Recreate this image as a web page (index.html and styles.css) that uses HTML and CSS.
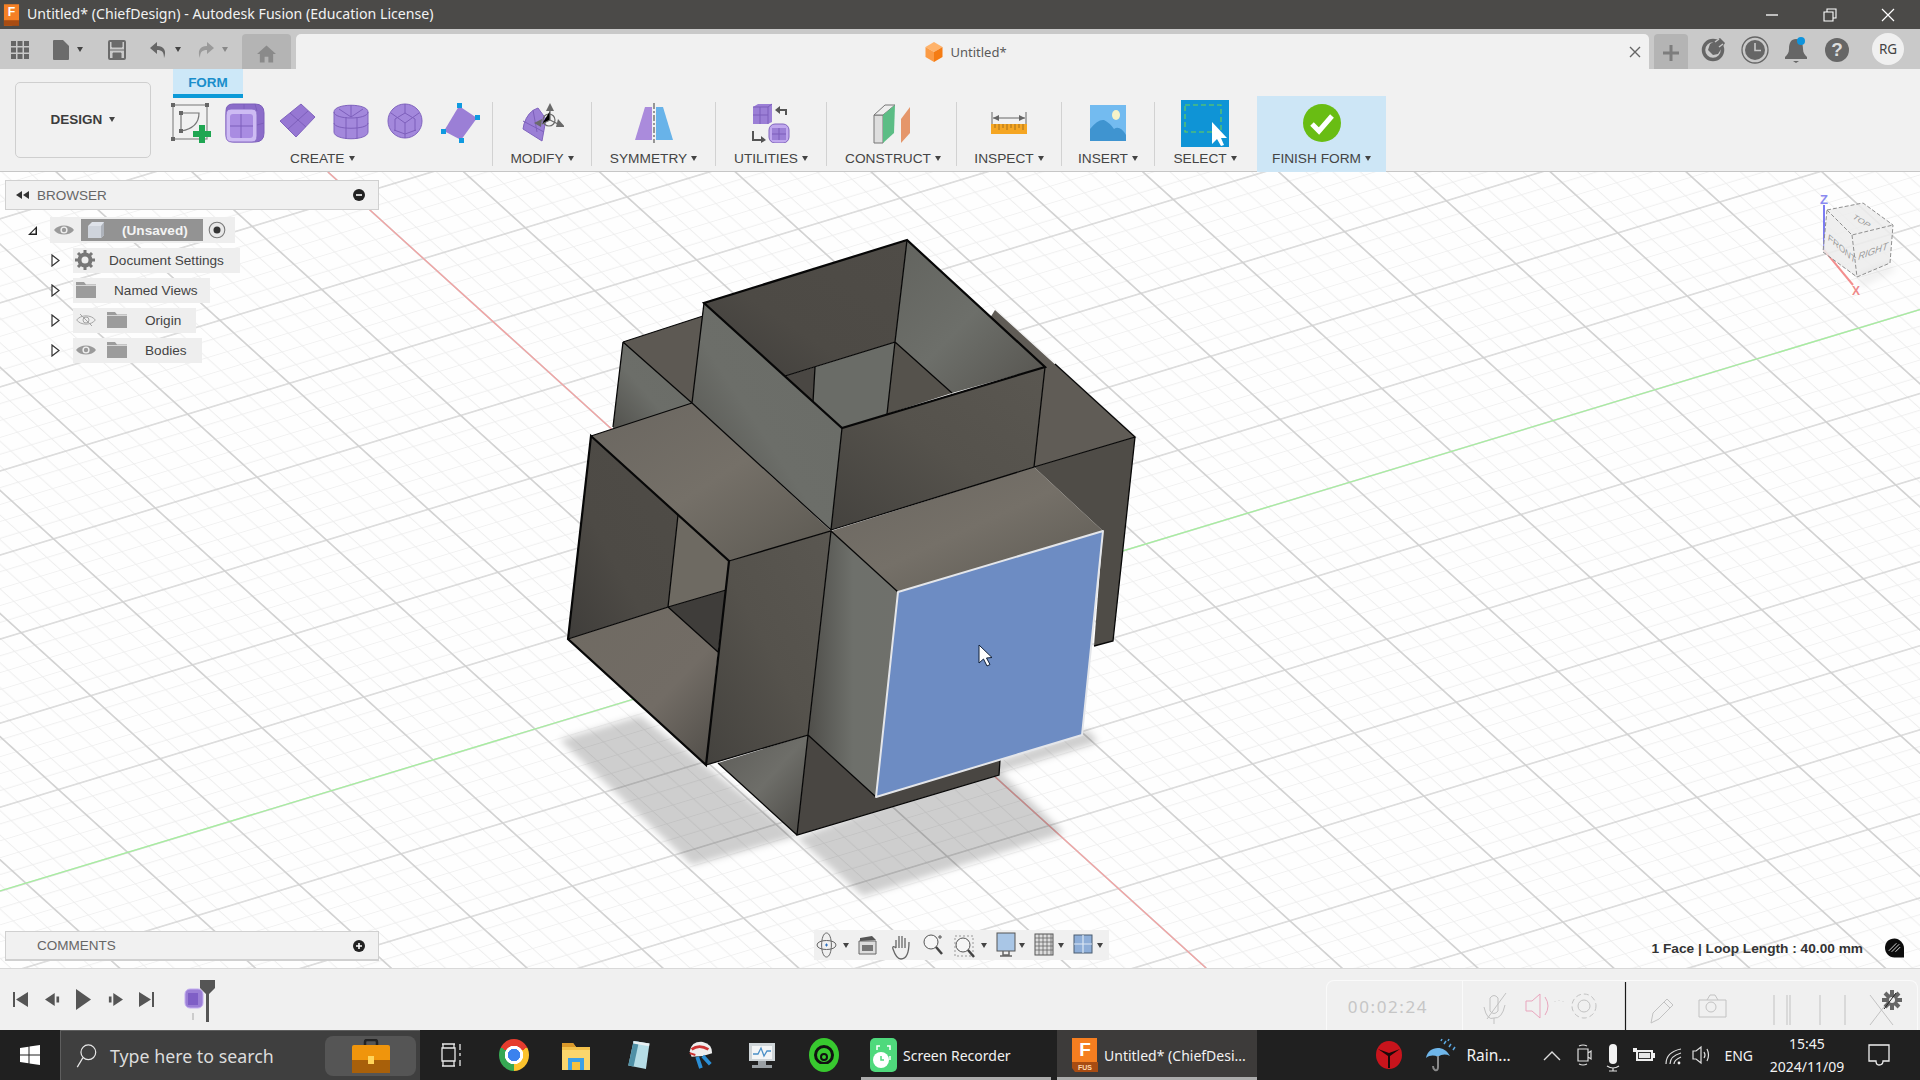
FILE: index.html
```html
<!DOCTYPE html>
<html lang="en">
<head>
<meta charset="utf-8">
<title>Untitled* (ChiefDesign) - Autodesk Fusion</title>
<link rel="stylesheet" href="styles.css">
</head>
<body>
<svg class="sprite" aria-hidden="true">
  <symbol id="eye" viewBox="0 0 20 14"><path d="M0 7C4 1 16 1 20 7 16 13 4 13 0 7Z" fill="#9a9a9a"/><circle cx="10" cy="7" r="3.6" fill="#f0f0f0"/><circle cx="10" cy="7" r="2.2" fill="#9a9a9a"/></symbol>
  <symbol id="eyeoff" viewBox="0 0 20 14"><path d="M.7 7C4.5 1.5 15.5 1.5 19.3 7 15.5 12.5 4.5 12.5.7 7Z" fill="none" stroke="#a5a5a5"/><circle cx="10" cy="7" r="3" fill="none" stroke="#a5a5a5"/><path d="M4 1 16 13" stroke="#a5a5a5"/></symbol>
  <symbol id="folder" viewBox="0 0 20 16"><path d="M0 0H8L10 2.500H20V16H0Z" fill="#9c9c9c"/><path d="M0 3.500H20" stroke="#f0f0f0" stroke-width=".7"/></symbol>
  <symbol id="expand" viewBox="0 0 9 13"><path d="M1 1 8 6.500 1 12Z" fill="#fff" stroke="#333" stroke-width="1.200"/></symbol>
</svg>
<div class="app">
  <header class="titlebar">
    <svg class="app-icon" viewBox="0 0 18 23"><path d="M1 0H17V18L9 23H1Z" fill="#f58025"/><path d="M1 17H17V23H1Z" fill="#a84c12"/><text x="9" y="13" class="app-f">F</text></svg>
    <span class="title-text">Untitled* (ChiefDesign) - Autodesk Fusion (Education License)</span>
    <div class="win-controls">
      <svg viewBox="0 0 14 14"><path d="M1 7H13" stroke="#fff" stroke-width="1.300"/></svg>
      <svg viewBox="0 0 14 14"><path d="M1 4H10V13H1ZM4 4V1H13V10H10" fill="none" stroke="#fff" stroke-width="1.100"/></svg>
      <svg viewBox="0 0 14 14"><path d="M1 1 13 13M13 1 1 13" stroke="#fff" stroke-width="1.200"/></svg>
    </div>
  </header>

  <div class="qbar">
    <svg class="qa qa-grid" viewBox="0 0 18 18"><path d="M0 0H5V5H0ZM6.500 0H11.500V5H6.500ZM13 0H18V5H13ZM0 6.500H5V11.500H0ZM6.500 6.500H11.500V11.500H6.500ZM13 6.500H18V11.500H13ZM0 13H5V18H0ZM6.500 13H11.500V18H6.500ZM13 13H18V18H13Z" fill="#666"/></svg>
    <svg class="qa qa-doc" viewBox="0 0 16 20"><path d="M0 1Q0 0 1 0H10L16 6V19Q16 20 15 20H1Q0 20 0 19Z" fill="#6b6b6b"/></svg>
    <span class="caret caret-doc"></span>
    <svg class="qa qa-save" viewBox="0 0 18 20"><path d="M1 2Q1 1 2 1H16Q17 1 17 2V18Q17 19 16 19H2Q1 19 1 18Z" fill="none" stroke="#6b6b6b" stroke-width="2"/><path d="M1 10H17M4 1V7H14V1M5 19V13H13V19" fill="#6b6b6b" stroke="#6b6b6b"/></svg>
    <svg class="qa qa-undo" viewBox="0 0 18 18"><path d="M8 1 1 7 8 13V9C13 9 15 11 15 17 17.500 11 16 5 8 5Z" fill="#666"/></svg>
    <span class="caret caret-undo"></span>
    <svg class="qa qa-redo" viewBox="0 0 18 18"><path d="M10 1 17 7 10 13V9C5 9 3 11 3 17 .5 11 2 5 10 5Z" fill="#9a9a9a"/></svg>
    <span class="caret caret-redo"></span>
    <div class="home-btn"><svg viewBox="0 0 20 18"><path d="M10 0 20 9H17V18H12V12H8V18H3V9H0Z" fill="#8a8a8a"/></svg></div>
    <div class="doc-tab">
      <span></span>
      <div class="doc-title">
        <svg viewBox="0 0 18 20"><path d="M9 0 17.500 5 9 10 .5 5Z" fill="#ffb36b"/><path d="M.5 5 9 10V20L.5 15Z" fill="#fb9b45"/><path d="M17.500 5 9 10V20L17.500 15Z" fill="#f57c14"/></svg>
        <span>Untitled*</span>
      </div>
      <svg class="tab-close" viewBox="0 0 12 12"><path d="M1 1 11 11M11 1 1 11" stroke="#666" stroke-width="1.400"/></svg>
    </div>
    <div class="plus-btn"><svg viewBox="0 0 16 16"><path d="M0 8H16M8 0V16" stroke="#7d7d7d" stroke-width="3"/></svg></div>
    <svg class="qr qr-1" viewBox="0 0 30 30"><circle cx="15" cy="15" r="9.500" fill="none" stroke="#666" stroke-width="3.500"/><path d="M12 9 22 3 27 8 20 19 15 20 10 15Z" fill="#666"/><path d="M17 7 21 4M21 12 25 9" stroke="#c8c8c8" stroke-width="1.500"/></svg>
    <svg class="qr qr-2" viewBox="0 0 30 30"><circle cx="15" cy="15" r="13" fill="none" stroke="#666" stroke-width="1.300"/><circle cx="15" cy="15" r="10" fill="#666"/><path d="M15 8V15.500H21" fill="none" stroke="#c8c8c8" stroke-width="1.600"/></svg>
    <svg class="qr qr-3" viewBox="0 0 30 30"><path d="M15 4C10 4 8 8 8 14 8 18 6 20 4 22V24H26V22C24 20 22 18 22 14 22 8 20 4 15 4Z" fill="#666"/><path d="M12 26H18L15 28Z" fill="#666"/><circle cx="20" cy="6" r="4" fill="#0f94dc"/></svg>
    <svg class="qr qr-4" viewBox="0 0 30 30"><circle cx="15" cy="15" r="12" fill="#666"/><text x="15" y="21" class="help-q">?</text></svg>
    <div class="avatar">RG</div>
  </div>

  <div class="ribbon">
    <button class="design-btn">DESIGN<span class="caret caret-design"></span></button>
    <section class="group group-create">
      <div class="form-tab">FORM</div>
      <div class="create-icons">
        <svg viewBox="0 0 40 40"><rect x="2" y="2" width="34" height="34" fill="none" stroke="#8a8a8a" stroke-width="1.200"/><path d="M10 10H28C28 20 22 26 10 28Z" fill="none" stroke="#777" stroke-width="1.200"/><path d="M0 0H4V4H0ZM34 0H38V4H34ZM0 34H4V38H0ZM8 8H12V12H8ZM8 26H12V30H8Z" fill="#666"/><path d="M28 22H34V28H40V34H34V40H28V34H22V28H28Z" fill="#1fa652"/></svg>
        <svg viewBox="0 0 40 40"><path d="M8 1H30Q39 1 39 10V30Q39 39 30 39H9Q1 39 1 31V8Q1 1 8 1Z" fill="#8b6cc9" stroke="#7d5fbb"/><path d="M1 12Q1 6 6 6H27Q32 6 32 12V33Q32 39 27 39H7Q1 39 1 33Z" fill="#cdbbf3" stroke="#8a6cc7"/><rect x="5" y="11" width="23" height="24" rx="3" fill="#a98ce2"/><path d="M16 11V35M5 23H28M19 1V6M30 1 32 8M32 22 39 20" stroke="#7d5fbb" fill="none"/></svg>
        <svg viewBox="0 0 40 40"><path d="M22 1 36 14 17 34 1 18Z" fill="#9677d3" stroke="#8064be"/><path d="M11 10 27 24M29 8 9 26" stroke="#7d5fbb"/></svg>
        <svg viewBox="0 0 40 40"><path d="M1 9C1 0 35 0 35 9V29C35 38 1 38 1 29Z" fill="#a388dc" stroke="#8064be"/><path d="M1 9C1 17 35 17 35 9M1 20C1 27 35 27 35 20M13 14V36M24 14V36M6 6 18 14 30 6M18 2V14" fill="none" stroke="#7d5fbb"/></svg>
        <svg viewBox="0 0 40 40"><ellipse cx="18" cy="18" rx="17" ry="17" fill="#a388dc" stroke="#8064be"/><path d="M18 20 4 10M18 20 32 10M18 20V35M18 10 8 16 8 28M18 10 28 16 28 28M18 1V10M7 27 18 31 29 27" fill="none" stroke="#7d5fbb"/></svg>
        <svg viewBox="0 0 40 40"><path d="M18 3 36 15 20 37 3 28Z" fill="#9b7fd6"/><path d="M16 0H21V5H16ZM34 12H39V17H34ZM0 26H5V31H0ZM18 35H23V40H18Z" fill="#0f9ae0"/></svg>
      </div>
      <div class="label label-create">CREATE<span class="caret"></span></div>
    </section>
    <i class="sep"></i>
    <section class="group group-modify">
      <div class="icon-box"><svg viewBox="0 0 44 40" width="44" height="40"><path d="M4 21Q8 8 18 5L26 16 22 38 3 26Z" fill="#9b7fd6" stroke="#8064be"/><path d="M13 7 17 29M3 18 24 29" stroke="#7d5fbb" fill="none"/><path d="M30 0 34 8H26ZM14 20 22 16 21 24ZM45 24 36 24 38 16Z" fill="#6a6a6a"/><circle cx="29" cy="17" r="6" fill="none" stroke="#6a6a6a" stroke-width="1.200"/><path d="M30 8V17L22 21M30 17 38 21" stroke="#6a6a6a" stroke-width="1.200"/></svg></div>
      <div class="label">MODIFY<span class="caret"></span></div>
    </section>
    <i class="sep"></i>
    <section class="group group-sym">
      <div class="icon-box"><svg viewBox="0 0 40 40" width="40" height="40"><path d="M11 4H18V37H1Z" fill="#aa8bdc"/><path d="M22 4H29L39 37H22Z" fill="#68b3e9"/><path d="M20 0V40" stroke="#666" stroke-dasharray="6 2 2 2" stroke-width="1.300"/></svg></div>
      <div class="label">SYMMETRY<span class="caret"></span></div>
    </section>
    <i class="sep"></i>
    <section class="group group-util">
      <div class="icon-box"><svg viewBox="0 0 40 40" width="40" height="40"><path d="M2 4 7 1H21V19L17 21H2Z" fill="#9b7fd6"/><path d="M2 12H17M9 4V21M17 4V21M2 4H17L21 1" fill="none" stroke="#7d5fbb"/><path d="M24 7 29 3V6H36V12H34V8H29V11Z" fill="#555"/><rect x="18" y="21" width="20" height="19" rx="6" fill="#c0a8ee" stroke="#8064be"/><rect x="21" y="25" width="14" height="12" fill="#9b7fd6"/><path d="M28 25V37M21 31H35" stroke="#7d5fbb"/><path d="M3 28V36H10V33L15 37 10 40V38H1V28Z" fill="#555"/></svg></div>
      <div class="label">UTILITIES<span class="caret"></span></div>
    </section>
    <i class="sep"></i>
    <section class="group group-con">
      <div class="icon-box"><svg viewBox="0 0 40 41" width="40" height="41"><path d="M1 12H10V40H1Z" fill="#dedede" stroke="#777"/><path d="M1 12 12 2H22L10 12Z" fill="#eee" stroke="#777"/><path d="M10 12 22 2 21 30 10 40Z" fill="#5cbd85"/><path d="M28 16 37 4V30L28 40Z" fill="#e5966a"/></svg></div>
      <div class="label">CONSTRUCT<span class="caret"></span></div>
    </section>
    <i class="sep"></i>
    <section class="group group-ins">
      <div class="icon-box"><svg viewBox="0 0 36 22" width="36" height="22"><path d="M1 0V12M35 0V12M2 6H34" stroke="#666"/><path d="M2 6 8 3V9ZM34 6 28 3V9Z" fill="#666"/><path d="M0 12H36V22H0Z" fill="#f5a623"/><path d="M4 12V16M8 12V18M12 12V16M16 12V18M20 12V16M24 12V18M28 12V16M32 12V18" stroke="#a6701c"/></svg></div>
      <div class="label">INSPECT<span class="caret"></span></div>
    </section>
    <i class="sep"></i>
    <section class="group group-insert">
      <div class="icon-box"><svg viewBox="0 0 36 36" width="36" height="36"><path d="M0 0H36V36H0Z" fill="#73bbf0"/><path d="M0 36V24Q8 14 14 15 20 18 24 24 30 20 36 30V36Z" fill="#3f94d0"/><ellipse cx="26" cy="10" rx="4" ry="5" fill="#f7f3c8"/></svg></div>
      <div class="label">INSERT<span class="caret"></span></div>
    </section>
    <i class="sep"></i>
    <section class="group group-sel">
      <div class="icon-box"><svg class="sel-ic" viewBox="0 0 48 47" width="48" height="47"><path d="M0 0H48V47H0Z" fill="#0f94d6"/><path d="M4 5H40V32H4Z" fill="none" stroke="#6fd14f" stroke-width="1.100" stroke-dasharray="5 3"/><path d="M31 22V44L36 39 40 46 43 45 40 38H46Z" fill="#fff"/></svg></div>
      <div class="label">SELECT<span class="caret"></span></div>
    </section>
    <section class="group group-fin">
      <div class="icon-box"><svg viewBox="0 0 38 38" width="38" height="38"><circle cx="19" cy="19" r="19" fill="#69bd13"/><path d="M9 20 16 27 29 12" fill="none" stroke="#fff" stroke-width="5"/></svg></div>
      <div class="label">FINISH FORM<span class="caret"></span></div>
    </section>
  </div>

  <main class="viewport">
    <svg class="scene" viewBox="0 172 1920 796" preserveAspectRatio="none">
      <defs>
        <pattern id="grid" width="100" height="100" patternUnits="userSpaceOnUse" patternTransform="matrix(1.018 -.3085 .695 .63 840.5 636.600)">
          <path d="M20 0V100M40 0V100M60 0V100M80 0V100M0 20H100M0 40H100M0 60H100M0 80H100" stroke="#ededed" stroke-width="1" fill="none"/>
          <path d="M0 0V100M100 0V100M0 0H100M0 100H100" stroke="#d2d2d2" stroke-width="1.800" fill="none"/>
        </pattern>
        <filter id="soft" x="-10%" y="-10%" width="120%" height="120%"><feGaussianBlur stdDeviation="3.500"/></filter>
        <linearGradient id="wall" x1="0" y1="1" x2="1" y2="0"><stop offset="0" stop-color="#4b4a46"/><stop offset=".45" stop-color="#6c6e69"/><stop offset="1" stop-color="#6a6c67"/></linearGradient>
        <linearGradient id="wallR" x1="0" y1="0" x2="1" y2="1"><stop offset="0" stop-color="#62635e"/><stop offset=".5" stop-color="#6d6f6a"/><stop offset="1" stop-color="#55534e"/></linearGradient>
        <linearGradient id="back" x1="0" y1="1" x2="1" y2="0"><stop offset="0" stop-color="#3f3d3a"/><stop offset=".4" stop-color="#4d4a45"/><stop offset="1" stop-color="#4f4c47"/></linearGradient>
        <linearGradient id="front" x1="0" y1="1" x2="1" y2="0"><stop offset="0" stop-color="#44423e"/><stop offset=".5" stop-color="#55524c"/><stop offset="1" stop-color="#5a5751"/></linearGradient>
        <linearGradient id="top" x1="0" y1="0" x2="1" y2="1"><stop offset="0" stop-color="#6a6660"/><stop offset=".5" stop-color="#757068"/><stop offset="1" stop-color="#5b5851"/></linearGradient>
        <linearGradient id="floor" x1="0" y1="0" x2="1" y2="1"><stop offset="0" stop-color="#6f6a62"/><stop offset=".6" stop-color="#726c65"/><stop offset="1" stop-color="#4f4c47"/></linearGradient>
        <linearGradient id="sideC" x1="0" y1="0" x2="1" y2="0"><stop offset="0" stop-color="#4f4e4a"/><stop offset=".5" stop-color="#6e706b"/><stop offset="1" stop-color="#6f706b"/></linearGradient>
        <linearGradient id="lower" x1="0" y1="0" x2="1" y2="1"><stop offset="0" stop-color="#5d5c58"/><stop offset=".5" stop-color="#6e6e69"/><stop offset="1" stop-color="#4a4844"/></linearGradient>
      </defs>
      <rect x="0" y="172" width="1920" height="796" fill="#fefefe"/>
      <rect x="0" y="172" width="1920" height="796" fill="url(#grid)"/>
      <path d="M328 172 1206 968" stroke="#f2a3a3" stroke-width="1.300"/>
      <path d="M0 891 1920 309.500" stroke="#a6ee9f" stroke-width="1.300"/>

      <g filter="url(#soft)" fill="#000" fill-opacity=".19">
        <path d="M560 740 640 716 797 836 692 865Z"/>
        <path d="M797 838 863 896 1064 833 1000 772 1098 742 1088 730 1000 760Z"/>
      </g>

      <polygon points="623,342 692,403 700,420 611,445" fill="url(#wall)"/>
      <polygon points="623,342 703,316 692,403" fill="#5d5953"/>
      <polygon points="907,240 704,303 785,376 895,342" fill="url(#back)"/>
      <polygon points="907,240 1045,367 952,393 895,342" fill="url(#wallR)"/>
      <polygon points="895,342 952,393 887,414" fill="#55524c"/>
      <polygon points="815,367 895,342 887,414 842,428 813,402" fill="#6a6c67"/>
      <polygon points="785,376 815,367 813,402" fill="#4a4743"/>
      <polygon points="704,303 842,428 831,530 692,403" fill="url(#wall)"/>
      <polygon points="842,428 1045,367 1034,467 831,530" fill="url(#front)"/>
      <polygon points="990,318 995,310 1135,437 1034,467 1045,367" fill="#605c56"/>
      <polygon points="1034,467 1135,437 1113,641 1094,646 1103,531" fill="#4f4c47"/>
      <polygon points="591,436 692,403 831,531 729,561" fill="url(#top)"/>
      <polygon points="591,436 678,515 668,607 568,639" fill="url(#back)"/>
      <polygon points="678,515 729,561 726,590 668,607" fill="#6e6a62"/>
      <polygon points="568,639 668,607 718,652 706,765" fill="url(#floor)"/>
      <polygon points="668,607 726,590 718,652" fill="#3f3d3a"/>
      <polygon points="729,561 831,531 808,735 706,765" fill="url(#front)"/>
      <polygon points="718,763 808,735 797,835" fill="url(#lower)"/>
      <polygon points="808,735 876,797 1000,760 999,775 797,835" fill="#494642"/>
      <polygon points="831,531 898,592 876,797 808,735" fill="url(#sideC)"/>
      <polygon points="831,531 1034,467 1103,531 898,592" fill="url(#top)"/>

      <g class="edges">
        <path d="M907 240 895 342 785 376M895 342 952 393M895 342 887 414M815 367 813 402M704 303 692 403M842 428 831 530 692 403M1045 367 1034 467 831 530M623 342 703 316M623 342 692 403M623 342 613 427M1055 364 1135 437 1034 467M1135 437 1113 641 1094 646M591 436 692 403M729 561 831 531 808 735 706 765M568 639 668 607 678 515M668 607 726 590M668 607 718 652M808 735 797 835 999 775 1000 760M718 763 797 835M808 735 876 797M831 531 898 592"/>
      </g>
      <path class="edges-thick" d="M907 240 704 303 842 428 1045 367ZM591 436 729 561 706 765 568 639Z"/>
      <polygon points="898,592 1103,531 1082,735 876,797" class="blue-face"/>
      <path d="M979 645V663L983.500 659 987 666 990 664.500 986.500 658 992 657.500Z" fill="#fff" stroke="#102038"/>

      <path d="M1824 205V250" stroke="#5c5cf0" stroke-width="2" opacity=".8"/>
      <path d="M1824 250 1853 285" stroke="#ef5f5f" stroke-width="2" opacity=".7"/>
      <polygon points="1827,210 1863,203 1893,225 1890,263 1857,277 1823,252" fill="#ececec" fill-opacity=".85"/>
      <polygon points="1857,277 1890,263 1896,270 1862,287" fill="#000" fill-opacity=".06" filter="url(#soft)"/>
      <path d="M1827 210 1863 203 1893 225 1890 263 1857 277 1823 252ZM1827 210 1852 235 1893 225M1852 235 1857 277" class="cube-lines"/>
      <text class="cube-z" x="1824" y="204">Z</text>
      <text class="cube-x" x="1856" y="295">X</text>
      <text class="cube-t" transform="matrix(.8 .5 -.4 .6 1852 218)">TOP</text>
      <text class="cube-t" transform="matrix(.8 .7 0 1 1828 240)">FRONT</text>
      <text class="cube-t" transform="matrix(.95 -.35 -.1 1 1858 260)">RIGHT</text>
    </svg>

    <div class="left-col">
      <div class="panel-head"><svg class="rew" viewBox="0 0 13 8"><path d="M6 0V8L0 4ZM13 0V8L7 4Z" fill="#333"/></svg><span class="panel-title">BROWSER</span><svg class="panel-dot" viewBox="0 0 12 12"><circle cx="6" cy="6" r="6" fill="#222"/><path d="M3 6H9" stroke="#fff" stroke-width="1.600"/></svg></div>
      <div class="tree">
        <div class="row row-root">
          <svg class="root-arrow" viewBox="0 0 9 9"><path d="M0 9 9 0V9Z" fill="#222"/><path d="M3 7.500 7.500 3V7.500Z" fill="#fff"/></svg>
          <div class="chip chip-root">
            <svg class="eye" viewBox="0 0 20 14"><use href="#eye"/></svg>
            <div class="root-name"><svg viewBox="0 0 18 18"><path d="M5 1H17V14L14 17H1V5Z" fill="#dfe3ea"/><path d="M1 5H14V17H1Z" fill="#cfd4dc"/><path d="M14 5 17 1V14L14 17Z" fill="#aeb3bb"/></svg><span>(Unsaved)</span></div>
            <svg class="radio" viewBox="0 0 18 18"><circle cx="9" cy="9" r="7.800" fill="#e8e8e8" stroke="#7a7a7a" stroke-width="1.100"/><circle cx="9" cy="9" r="3.500" fill="#333"/></svg>
          </div>
        </div>
        <div class="row"><svg class="exp" viewBox="0 0 9 13"><use href="#expand"/></svg><div class="chip chip-doc"><svg class="gear" viewBox="0 0 20 20"><circle cx="10" cy="10" r="5.500" fill="none" stroke="#777" stroke-width="4"/><path d="M10 0V20M0 10H20M3 3 17 17M17 3 3 17" stroke="#777" stroke-width="3" stroke-dasharray="3.500 13 3.500 0"/></svg><span>Document Settings</span></div></div>
        <div class="row"><svg class="exp" viewBox="0 0 9 13"><use href="#expand"/></svg><div class="chip chip-views"><svg class="folder" viewBox="0 0 20 16"><use href="#folder"/></svg><span>Named Views</span></div></div>
        <div class="row"><svg class="exp" viewBox="0 0 9 13"><use href="#expand"/></svg><div class="chip chip-origin"><svg class="eye" viewBox="0 0 20 14"><use href="#eyeoff"/></svg><svg class="folder" viewBox="0 0 20 16"><use href="#folder"/></svg><span>Origin</span></div></div>
        <div class="row"><svg class="exp" viewBox="0 0 9 13"><use href="#expand"/></svg><div class="chip chip-origin"><svg class="eye" viewBox="0 0 20 14"><use href="#eye"/></svg><svg class="folder" viewBox="0 0 20 16"><use href="#folder"/></svg><span>Bodies</span></div></div>
      </div>
    </div>

    <div class="comments"><span class="panel-title">COMMENTS</span><svg class="panel-dot" viewBox="0 0 12 12"><circle cx="6" cy="6" r="6" fill="#222"/><path d="M3 6H9M6 3V9" stroke="#fff" stroke-width="1.600"/></svg></div>

    <div class="navbar">
      <svg viewBox="814 930 295 30" width="295" height="30">
        <g fill="none" stroke="#666">
          <path d="M817 945C817 939 836 939 836 945 836 951 817 951 817 945Z"/>
          <path d="M826.500 933C820 933 820 957 826.500 957 833 957 833 933 826.500 933Z"/>
        </g>
        <path d="M825 945H828M826.500 943.500V946.500" stroke="#2a6fc0"/>
        <path d="M843 943H849L846 948ZM981 943H987L984 948ZM1019 943H1025L1022 948ZM1058 943H1064L1061 948ZM1097 943H1103L1100 948Z" fill="#444"/>
        <path d="M859 941H876V954H859Z" fill="#ddd" stroke="#666"/><path d="M862 945H873V951H862Z" fill="#777"/><path d="M860 938 872 936 876 940 860 941Z" fill="#555"/>
        <path d="M896 948V940M899 948V936M902 948V936M905 948V938M896 948C894 946 892 946 893 949 895 955 897 959 901 959 906 959 909 955 909 942" fill="none" stroke="#666" stroke-width="1.300"/>
        <circle cx="931" cy="942" r="7" fill="#f6f6f6" stroke="#555"/><path d="M936 947 942 954" stroke="#444" stroke-width="2.500"/><path d="M938 937H942M940 935V939" stroke="#555"/>
        <rect x="955" y="936" width="18" height="20" fill="none" stroke="#999" stroke-dasharray="2 2"/><circle cx="963" cy="945" r="7" fill="#f6f6f6" stroke="#555"/><path d="M968 950 974 957" stroke="#444" stroke-width="2.500"/>
        <rect x="997" y="933" width="18" height="18" fill="#a9c6e6" stroke="#555"/><path d="M1003 951V955H1009V951M1000 956H1012" stroke="#666" fill="none" stroke-width="1.500"/>
        <rect x="1035" y="934" width="18" height="21" fill="#ddd" stroke="#555"/><path d="M1039 934V955M1043 934V955M1047 934V955M1051 934V955M1035 938H1053M1035 942H1053M1035 946H1053M1035 950H1053" stroke="#666" stroke-width=".8"/>
        <rect x="1074" y="935" width="18" height="18" fill="#8eaed8" stroke="#4a5c70"/><path d="M1083 935V953M1074 944H1092" stroke="#dde8f4" stroke-width="1.200"/>
      </svg>
    </div>

    <div class="status"><span>1 Face | Loop Length : 40.00 mm</span><svg viewBox="0 0 20 20"><path d="M10 0C15 0 20 5 20 10V20H10C4 20 0 15 0 10 0 4 4 0 10 0Z" fill="#0c0c0c"/><path d="M4 13 12 5M7 14 15 6M11 14 16 9" stroke="#ddd" stroke-width="1"/></svg></div>
  </main>

  <div class="timeline">
    <div class="tl-controls">
      <svg viewBox="0 0 15 15"><path d="M0 0H2V15H0ZM15 0V15L3 7.500Z" fill="#555"/></svg>
      <svg viewBox="0 0 17 15"><path d="M11 0V15L0 7.500ZM13 4H16V11H13Z" fill="#555"/></svg>
      <svg viewBox="0 0 15 21"><path d="M0 0 15 10.500 0 21Z" fill="#555"/></svg>
      <svg viewBox="0 0 17 15"><path d="M6 0V15L17 7.500ZM1 4H4V11H1Z" fill="#555"/></svg>
      <svg viewBox="0 0 15 15"><path d="M13 0H15V15H13ZM0 0V15L12 7.500Z" fill="#555"/></svg>
    </div>
    <div class="tl-track">
      <svg viewBox="0 0 36 42" width="36" height="42"><rect x="2" y="9" width="18" height="19" rx="5" fill="#9b7fd6" stroke="#c3aef0"/><rect x="5" y="13" width="10" height="12" fill="#7f5fc6"/><path d="M10 33V40" stroke="#ccc" stroke-width="2"/><path d="M17 0H32V8L26 14V42H23V14L17 8Z" fill="#555"/></svg>
    </div>
    <div class="rec">
      <div class="rec-time">00:02:24</div>
      <svg viewBox="1463 980 455 50" width="455" height="50">
        <g fill="none" stroke="#c2c2c2">
          <path d="M1491 997Q1495 992 1499 997V1010Q1495 1015 1491 1010ZM1485 1006Q1488 1020 1495 1017 1503 1018 1506 1004M1495 1017V1023M1507 992 1488 1018"/>
          <path class="pink" d="M1527 1000V1010H1533L1541 1017V993L1533 1000ZM1546 996Q1552 1005 1546 1014"/>
          <path d="M1556 1000V1001M1560 999V1000M1564 1000V1001" opacity=".6"/>
          <circle cx="1585" cy="1005" r="6"/><circle cx="1585" cy="1005" r="12" stroke-dasharray="5 3"/>
          <path d="M1652 1022 1654 1012 1668 998 1674 1004 1660 1018ZM1665 1001 1671 1007"/>
          <path d="M1700 999V1016H1727V999ZM1708 999 1711 994H1716L1719 999"/><circle cx="1712" cy="1006" r="5"/>
          <path d="M1775 994V1024M1788 994V1024M1791 994V1024"/>
          <path d="M1821 994V1024M1846 994V1024"/>
          <path d="M1871 994 1894 1024M1894 994 1871 1024"/>
        </g>
        <path d="M1626.500 981V1029" stroke="#1a1a1a" stroke-width="1.200"/>
        <path d="M1893 989V1009M1883 999H1903M1886 992 1900 1006M1900 992 1886 1006" stroke="#666" stroke-width="4"/><circle cx="1893" cy="999" r="6" fill="#666"/><circle cx="1893" cy="999" r="3" fill="#eee"/><path d="M1885 1008 1897 992" stroke="#222"/>
      </svg>
    </div>
  </div>

  <footer class="taskbar">
    <div class="start"><svg viewBox="0 0 20 20"><path d="M0 3 8.500 1.700V9.500H0ZM9.500 1.500 20 0V9.500H9.500ZM0 10.500H8.500V18.300L0 17ZM9.500 10.500H20V20L9.500 18.500Z" fill="#fff"/></svg></div>
    <div class="search">
      <svg class="search-glass" viewBox="0 0 22 26"><circle cx="13" cy="9" r="8" fill="none" stroke="#e8e8e8" stroke-width="1.300"/><path d="M7 15 1 25" stroke="#e8e8e8" stroke-width="1.300"/></svg>
      <span class="search-text">Type here to search</span>
      <div class="brief-tile"><svg viewBox="0 0 38 34"><path d="M13 8V3Q13 1 15 1H23Q25 1 25 3V8" fill="none" stroke="#222" stroke-width="2.500"/><rect y="6" width="38" height="28" rx="2" fill="#f0950c"/><rect y="21" width="38" height="13" fill="#a8600a"/><rect x="16" y="17" width="6" height="8" fill="#ffd45a"/></svg></div>
    </div>
    <div class="slot"><svg class="ic-task" viewBox="0 0 20 24"><path d="M1 1H14M1 5H14V18H1ZM1 23H14M2 18V23M13 18V23M2 1V5M13 1V5M19 1V7M19 10V13M19 17V23" fill="none" stroke="#e8e8e8" stroke-width="1.300"/></svg></div>
    <div class="slot slot-wide"><div class="chrome"></div></div>
    <div class="slot"><svg class="ic-28" viewBox="0 0 28 30"><path d="M0 3H11L14 7H28V30H0Z" fill="#f3c14a"/><path d="M0 3H11L14 7H0Z" fill="#d9982a"/><path d="M0 10H28V30H0Z" fill="#fbd66d"/><path d="M6 18H22V30H6Z" fill="#3da0e6"/><path d="M10 22H18V30H10Z" fill="#f6c23e"/></svg></div>
    <div class="slot"><svg class="ic-28" viewBox="0 0 26 34"><path d="M8 1 26 4 22 33 2 29Z" fill="#b6dde6"/><path d="M8 1 14 2 8 30 2 29Z" fill="#4f90a6"/><path d="M8 1 26 4 25.500 7 7.500 4Z" fill="#e8eff1"/></svg></div>
    <div class="slot"><svg class="ic-28" viewBox="0 0 30 32"><path d="M4 12Q6 1 18 2 28 4 28 14L18 17 6 18Z" fill="#eee"/><path d="M6 10Q14 4 24 10" fill="none" stroke="#c33" stroke-width="3"/><path d="M12 18 16 30M18 17 26 26" stroke="#2b8fd6" stroke-width="4"/><path d="M4 14 10 16" stroke="#c33" stroke-width="2"/></svg></div>
    <div class="slot slot-narrow"><svg class="ic-28" viewBox="0 0 28 30"><path d="M1 3H27V21H1Z" fill="#cfd5d8"/><path d="M4 6H24V19H4Z" fill="#f3f5f6"/><path d="M5 14H10L13 8 16 16 19 11H23" fill="none" stroke="#4a8fc7" stroke-width="1.300"/><path d="M10 21H18V25H24V28H4V25H10Z" fill="#9aa0a4"/></svg></div>
    <div class="slot slot-wide"><svg class="ic-30" viewBox="0 0 30 34"><ellipse cx="15" cy="17" rx="15" ry="17" fill="#38c92f"/><circle cx="15" cy="17" r="8.500" fill="none" stroke="#111" stroke-width="3"/><circle cx="15" cy="19" r="3" fill="none" stroke="#111" stroke-width="2"/><path d="M10 26H20V30H10Z" fill="#38c92f"/></svg></div>
    <div class="task task-rec">
      <svg class="ic-27" viewBox="0 0 27 34"><rect width="27" height="34" rx="5" fill="#4fd97c"/><path d="M10 8H7V12M17 8H20V12M20 18V22" fill="none" stroke="#fff" stroke-width="1.500"/><circle cx="11" cy="22" r="8" fill="#fff"/><path d="M11 18V22H14" fill="none" stroke="#4fd97c" stroke-width="1.500"/></svg>
      <span>Screen Recorder</span>
    </div>
    <div class="task task-fus">
      <svg class="ic-27" viewBox="0 0 27 34"><path d="M1 0H26V26H1Z" fill="#f57e20"/><path d="M1 24H27V34H4L1 30Z" fill="#a84c12"/><text class="app-f app-f-lg" x="14" y="18">F</text><text class="fus" x="14" y="32">FUS</text></svg>
      <span>Untitled* (ChiefDesi...</span>
    </div>
    <div class="tray">
      <svg class="ic-tray-red" viewBox="0 0 26 28"><ellipse cx="13" cy="14" rx="13" ry="14" fill="#c8141c"/><path d="M2 8 12 15V27H14V15L24 8 13 12Z" fill="#1a0a0a"/></svg>
      <svg class="ic-umb" viewBox="0 0 30 34"><path d="M0 20C2 8 18 6 24 18 20 16 16 16 12 19 8 17 4 17 0 20Z" fill="#6fb6ea"/><path d="M12 18V29Q12 33 9 32 7 31 7 28" fill="none" stroke="#8a8a8a" stroke-width="2"/><path d="M18 6 20 3M23 9 25 6M27 12 29 9M15 3 16 1M22 3 23 1" stroke="#5ba7e0" stroke-width="1.500"/></svg>
      <span class="rain">Rain...</span>
      <svg class="tray-icons" viewBox="1540 1030 172 50" width="172" height="50">
        <path d="M1543 1060 1551 1052 1559 1060" fill="none" stroke="#ddd" stroke-width="1.400"/>
        <g fill="none" stroke="#e0e0e0" stroke-width="1.200"><path d="M1577 1049H1587V1061H1577ZM1587 1053 1590 1051V1059L1587 1057M1578 1046Q1582 1044 1586 1046M1578 1064Q1582 1066 1586 1064"/><path d="M1606 1066Q1612 1070 1618 1066M1612 1068V1071M1608 1071H1616"/><path d="M1692 1051H1695L1700 1047V1063L1695 1059H1692ZM1703 1052Q1705 1055 1703 1058M1706 1049Q1709 1055 1706 1061"/><path d="M1665 1064Q1665 1052 1680 1049M1669 1064Q1669 1056 1680 1053M1673 1064Q1673 1060 1680 1057"/></g>
        <rect x="1608" y="1044" width="8" height="20" rx="4" fill="#f2f2f2"/>
        <path d="M1635 1050H1652V1061H1635ZM1652 1053H1654V1058H1652ZM1632 1048H1636V1052H1632Z" fill="#f0f0f0"/>
        <rect x="1637" y="1052" width="13" height="7" fill="#333"/><rect x="1638" y="1053" width="11" height="5" fill="#e8e8e8"/>
        <circle cx="1678" cy="1063" r="1.400" fill="#eee"/>
      </svg>
      <span class="eng">ENG</span>
      <div class="clock"><span>15:45</span><span>2024/11/09</span></div>
      <svg class="notif" viewBox="0 0 22 22"><path d="M1 1H21V17H15Q15 21 11 21 8 21 8 17H1Z" fill="none" stroke="#f0f0f0" stroke-width="1.300"/></svg>
    </div>
  </footer>
</div>
</body>
</html>
```
FILE: styles.css
```css
* { box-sizing: border-box; }
html, body { margin: 0; height: 100%; overflow: hidden; }
body { font-family: "Liberation Sans", Arial, sans-serif; color: #444; background: #f1f1f1; }
.sprite { position: absolute; width: 0; height: 0; }
svg { display: block; flex: none; }
.app { display: flex; flex-direction: column; height: 1080px; width: 1920px; }
.caret { display: inline-block; width: 0; height: 0; border-left: 3.5px solid transparent; border-right: 3.5px solid transparent; border-top: 5px solid #444; margin-left: 4px; vertical-align: 2px; flex: none; }

/* title bar */
.titlebar { height: 29px; background: #4b4a48; display: flex; align-items: center; color: #f2f2f2; flex: none; }
.app-icon { width: 17px; height: 22px; margin: 1px 7px 0 3px; }
.app-f { font: bold 13px "Liberation Sans", sans-serif; fill: #fff; text-anchor: middle; }
.app-f-lg { font-size: 19px; }
.fus { font: bold 7px "Liberation Sans", sans-serif; fill: #ffd9b0; text-anchor: middle; }
.title-text { font: 14.15px "Noto Sans", sans-serif; margin-top: -2px; }
.win-controls { margin-left: auto; display: flex; gap: 44px; padding-right: 25px; }
.win-controls svg { width: 14px; height: 14px; }

/* quick access */
.qbar { height: 40px; background: #c9c9c9; display: flex; align-items: center; flex: none; }
.qa { margin-top: 1px; }
.qa-grid { width: 18px; height: 18px; margin-left: 11px; }
.qa-doc { width: 16px; height: 20px; margin-left: 24px; }
.caret-doc { margin-left: 8px; }
.qa-save { width: 18px; height: 20px; margin-left: 25px; }
.qa-undo { width: 18px; height: 18px; margin-left: 23px; }
.caret-undo { margin-left: 8px; }
.qa-redo { width: 18px; height: 18px; margin-left: 16px; }
.caret-redo { margin-left: 7px; border-top-color: #888; }
.home-btn { align-self: flex-end; width: 49px; height: 35px; margin-left: 14px; background: #b4b4b4; border-radius: 4px 4px 0 0; display: flex; align-items: center; justify-content: center; padding-top: 5px; }
.home-btn svg { width: 19px; height: 18px; }
.doc-tab { align-self: flex-end; flex: 1; height: 35px; margin-left: 5px; background: #f1f1f1; border-radius: 5px 5px 0 0; display: grid; grid-template-columns: 1fr auto 1fr; align-items: center; padding-top: 1px; }
.doc-title { display: flex; align-items: center; gap: 7px; font: 13px "Noto Sans", sans-serif; color: #5a5a5a; margin-right: 13px; }
.doc-title svg { width: 18px; height: 20px; }
.tab-close { width: 12px; height: 12px; justify-self: end; margin-right: 8px; }
.plus-btn { align-self: flex-end; width: 34px; height: 35px; margin-left: 5px; background: #b4b4b4; border-radius: 4px 4px 0 0; display: flex; align-items: center; justify-content: center; padding-top: 2px; }
.plus-btn svg { width: 16px; height: 16px; }
.qr { width: 30px; height: 30px; margin-top: 1px; }
.qr-1 { margin-left: 10px; }
.qr-2 { margin-left: 12px; }
.qr-3, .qr-4 { margin-left: 11px; }
.help-q { font: bold 19px "Liberation Sans", sans-serif; fill: #ddd; text-anchor: middle; }
.avatar { width: 32px; height: 32px; margin: 0 16px 0 20px; border-radius: 50%; background: #f0f0f0; display: flex; align-items: center; justify-content: center; font: 13.5px "Noto Sans", sans-serif; color: #444; }

/* ribbon */
.ribbon { height: 103px; background: #f1f1f1; border-bottom: 1px solid #c6c6c6; display: flex; padding-left: 15px; flex: none; }
.design-btn { width: 136px; height: 76px; margin: 13px 21px 0 0; border: 1px solid #cfcfcf; border-radius: 5px; background: #f1f1f1; font: bold 13.5px "Liberation Sans", sans-serif; color: #3c3c3c; padding: 0 0 2px; }
.caret-design { margin-left: 7px; }
.group { display: flex; flex-direction: column; align-items: center; padding-top: 31px; }
.icon-box { height: 46px; display: flex; align-items: center; justify-content: center; flex: none; }
.label { height: 26px; font-size: 13.7px; line-height: 26px; color: #444; white-space: nowrap; flex: none; }
.sep { width: 1px; height: 64px; margin-top: 33px; background: #d2d2d2; flex: none; }
.group-create { width: 320px; padding-top: 0; align-items: flex-start; }
.form-tab { width: 70px; height: 29px; margin: 0 0 2px 1px; background: #cde8f8; border-bottom: 4px solid #0b9ad8; font: bold 13.5px/28px "Liberation Sans", sans-serif; color: #1a8ecb; text-align: center; flex: none; }
.create-icons { display: flex; gap: 14px; height: 46px; align-items: center; margin-left: -1px; flex: none; }
.create-icons svg { width: 40px; height: 40px; }
.label-create { margin-left: 118px; }
.group-modify { width: 98px; }
.group-sym { width: 123px; }
.group-util { width: 110px; }
.group-con { width: 129px; padding-left: 3px; }
.group-ins { width: 104px; }
.group-insert { width: 92px; }
.group-sel { width: 102px; padding-right: 2px; }
.sel-ic { margin-right: 1px; }
.group-fin { width: 129px; height: 76px; margin-top: 27px; padding-top: 4px; background: #cde6f6; }

/* viewport */
.viewport { position: relative; flex: 1; overflow: hidden; background: #fefefe; }
.scene { position: absolute; inset: 0; width: 100%; height: 100%; }
.edges { fill: none; stroke: #0d0d0d; stroke-width: 1.3; }
.edges path, .edges-thick { fill: none; stroke: #070707; }
.edges-thick { stroke-width: 2.2; stroke-linejoin: miter; }
.blue-face { fill: #6d8cc3; stroke: #e4e6ea; stroke-width: 2; stroke-linejoin: round; }
.cube-lines { fill: none; stroke: #8f8f8f; stroke-dasharray: 4 2; stroke-width: 1; }
.cube-z { font: bold 13px "Liberation Sans", sans-serif; fill: #8a8af0; text-anchor: middle; }
.cube-x { font: bold 12px "Liberation Sans", sans-serif; fill: #ef8a8a; text-anchor: middle; }
.cube-t { font: italic 10px "Liberation Sans", sans-serif; fill: #9a9a9a; }

.left-col { position: absolute; left: 5px; top: 8px; width: 374px; }
.panel-head, .comments { height: 30px; background: #f1f1f1; border: 1px solid #d0d0d0; display: flex; align-items: center; padding-left: 31px; padding-right: 13px; position: relative; }
.rew { width: 13px; height: 8px; margin-left: -21px; margin-right: 8px; }
.panel-title { font-size: 13.5px; color: #666; }
.panel-dot { width: 12px; height: 12px; margin-left: auto; }
.comments { position: absolute; left: 5px; bottom: 7px; width: 374px; height: 30px; border-bottom-width: 2px; }

.tree { display: flex; flex-direction: column; padding-top: 5px; font-size: 13.6px; color: #444; }
.row { height: 30px; display: flex; align-items: center; padding-left: 46px; }
.exp { width: 9px; height: 13px; margin-right: 13px; }
.chip { height: 25px; background: #eeeeee; display: flex; align-items: center; padding-left: 3px; }
.chip-doc { width: 167px; padding-left: 2px; }
.chip-doc span { margin-left: 14px; }
.gear { width: 20px; height: 20px; }
.folder { width: 20px; height: 16px; }
.chip-views { width: 137px; }
.chip-views span { margin-left: 18px; }
.chip-origin { padding-right: 15px; }
.chip-origin .eye { width: 20px; height: 14px; }
.chip-origin .folder { margin-left: 11px; }
.chip-origin span { margin-left: 18px; }
.row-root { padding-left: 23px; }
.root-arrow { width: 9px; height: 9px; margin-right: 13px; }
.chip-root { width: 185px; height: 26px; padding-left: 4px; }
.chip-root .eye { width: 20px; height: 14px; margin-right: 7px; }
.root-name { width: 122px; height: 22px; background: #939393; display: flex; align-items: center; color: #f4f4f4; font-weight: bold; }
.root-name svg { width: 18px; height: 18px; margin-left: 6px; margin-right: 17px; }
.radio { width: 18px; height: 18px; margin-left: 5px; }

.navbar { position: absolute; left: 814px; bottom: 8px; height: 30px; background: #f0f0f0; }
.status { position: absolute; right: 16px; bottom: 10px; display: flex; align-items: center; font-size: 13.7px; font-weight: bold; color: #333; }
.status svg { width: 19px; height: 20px; margin-left: 22px; }

/* timeline */
.timeline { height: 62px; background: #f0f0f0; border-top: 1px solid #d8d8d8; display: flex; position: relative; flex: none; }
.tl-controls { display: flex; align-items: center; gap: 16.5px; padding-left: 13px; height: 60px; }
.tl-controls svg { width: 15px; height: 15px; }
.tl-controls svg:nth-child(3) { height: 21px; }
.tl-track { margin: 11px 0 0 29px; }
.rec { margin-left: auto; margin-right: 2px; margin-top: 11px; width: 592px; height: 50px; border: 1px solid #fafafa; border-bottom: 0; border-radius: 8px 8px 0 0; display: flex; }
.rec svg { margin-left: -1px; }
.rec-time { width: 137px; border-right: 1px solid #fafafa; font: 17px "Noto Sans", sans-serif; letter-spacing: 1.6px; color: #c6c6c6; display: flex; align-items: center; justify-content: center; padding-right: 13px; padding-top: 2px; }
.pink { stroke: #e9a5bd; }

/* taskbar */
.taskbar { height: 50px; background: #202020; display: flex; align-items: center; color: #f2f2f2; font-family: "Noto Sans", sans-serif; flex: none; }
.start { width: 60px; display: flex; padding-left: 20px; }
.start svg { width: 20px; height: 22px; }
.search { width: 360px; height: 50px; background: #3f3f3f; border-top: 1px solid #5e5e5e; border-left: 1px solid #5e5e5e; display: flex; align-items: center; padding-left: 15px; }
.search-glass { width: 21px; height: 24px; }
.search-text { margin-left: 13px; font-size: 17.8px; color: #dcdcdc; }
.brief-tile { margin-left: auto; margin-right: 4px; width: 91px; height: 40px; border-radius: 8px; background: #555; display: flex; align-items: center; justify-content: center; }
.brief-tile svg { width: 38px; height: 34px; }
.slot { width: 62px; display: flex; align-items: center; justify-content: center; }
.slot-wide { width: 63px; }
.slot-narrow { width: 61px; }
.ic-task { width: 20px; height: 24px; }
.ic-28 { width: 28px; height: 30px; }
.ic-30 { width: 30px; height: 34px; }
.ic-27 { width: 27px; height: 34px; }
.chrome { width: 30px; height: 32px; border-radius: 50%; background: radial-gradient(circle, #3b82ee 0 6px, #fff 6.5px 9px, transparent 9.5px), conic-gradient(#e53c2e 0 60deg, #fbc22d 60deg 180deg, #36a853 180deg 300deg, #e53c2e 300deg); }
.task { height: 50px; border-bottom: 3px solid #ababab; display: flex; align-items: center; font-size: 14px; padding-top: 3px; }
.task-rec { width: 190px; margin-left: 6px; padding-left: 9px; gap: 6px; }
.task-fus { width: 200px; margin-left: 6px; padding-left: 14px; gap: 6px; background: #3d3b3a; }
.tray { margin-left: auto; display: flex; align-items: center; font-size: 15.5px; padding-right: 30px; }
.ic-tray-red { width: 26px; height: 28px; }
.ic-umb { width: 30px; height: 34px; margin-left: 24px; }
.rain { margin-left: 10px; width: 75px; }
.eng { margin-left: 11px; font-size: 14px; }
.clock { display: flex; flex-direction: column; align-items: center; margin-left: 13px; width: 82px; font-size: 14px; line-height: 23px; }
.notif { width: 22px; height: 22px; margin-left: 20px; }
```
